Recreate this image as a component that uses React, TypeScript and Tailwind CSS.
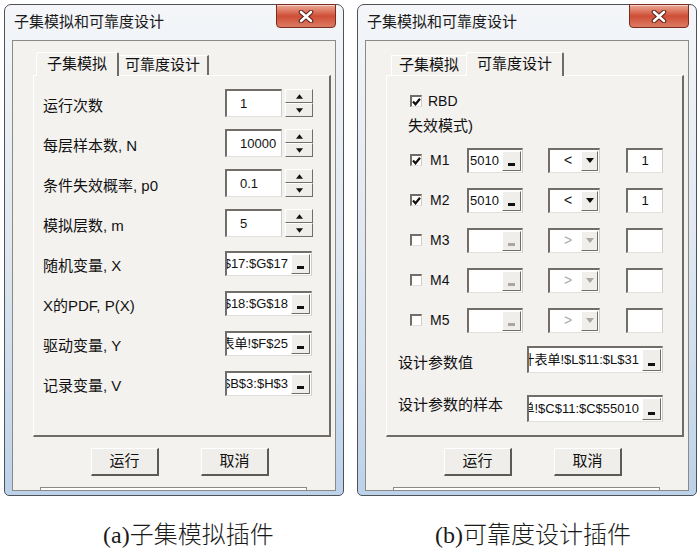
import { FC, ReactNode } from 'react';

const sunken =
    'border-t-2 border-l-2 border-r border-b border-t-[#716d68] border-l-[#716d68] border-r-[#cfccc8] border-b-[#e2e0dc] bg-white';
const raised =
    'border-t border-l border-r border-b border-t-white border-l-white border-r-[#716d68] border-b-[#716d68] bg-[#f0eeea]';

const Arrow: FC<{ up?: boolean; color?: string; w?: number }> = ({
    up,
    color = '#111',
    w = 7
}) => (
    <svg width={w} height={Math.ceil(w / 2) + 1} viewBox={`0 0 ${w} ${w / 2 + 1}`}>
        <path
            d={up ? `M${w / 2} 0L${w} ${w / 2 + 1}H0z` : `M0 0h${w}L${w / 2} ${w / 2 + 1}z`}
            fill={color}
        />
    </svg>
);

const Check: FC<{ checked?: boolean }> = ({ checked }) => (
    <div className={`flex h-[12px] w-[12px] flex-none items-center justify-center ${sunken}`}>
        {checked && (
            <svg width="9" height="8" viewBox="0 0 9 8">
                <path d="M1 3.5l2.5 2.8L8 0.8" stroke="#111" strokeWidth="2.2" fill="none" />
            </svg>
        )}
    </div>
);

const RefEdit: FC<{
    text?: string;
    className: string;
    left?: boolean;
    disabled?: boolean;
}> = ({ text, className, left, disabled }) => (
    <div className={`flex flex-none items-stretch ${sunken} ${className}`}>
        <div
            className={`flex min-w-0 flex-1 items-center overflow-hidden whitespace-nowrap text-[13px] ${
                left ? 'justify-start pl-[1px]' : 'justify-end pr-[3px]'
            }`}
        >
            <span className="flex-none">{text}</span>
        </div>
        <div
            className={`my-[1px] mr-[1px] flex w-[19px] flex-none items-end justify-center pb-[4px] ${raised}`}
        >
            <div className={`h-[3px] w-[7px] ${disabled ? 'bg-[#aaa7a2]' : 'bg-[#111]'}`} />
        </div>
    </div>
);

const Combo: FC<{ sym: string; disabled?: boolean }> = ({ sym, disabled }) => (
    <div className={`flex h-[25px] w-[52px] flex-none items-stretch ${sunken}`}>
        <div
            className={`flex flex-1 items-center pl-[14px] text-[14px] ${
                disabled ? 'text-[#aaa7a2]' : 'text-[#111]'
            }`}
        >
            {sym}
        </div>
        <div className={`my-[1px] mr-[1px] flex w-[17px] items-center justify-center ${raised}`}>
            <Arrow w={8} color={disabled ? '#aaa7a2' : '#111'} />
        </div>
    </div>
);

const SpinRow: FC<{ label: string; value: string }> = ({ label, value }) => (
    <div className="flex h-[40px] items-center">
        <div className="mt-[6px] w-[191px] pl-[9px] text-[15px]">{label}</div>
        <div className={`flex h-[28px] w-[57px] items-center pl-[13px] text-[13px] ${sunken}`}>
            {value}
        </div>
        <div className="ml-[3px] flex h-[28px] w-[28px] flex-col">
            <div className={`flex flex-1 items-center justify-center ${raised}`}>
                <Arrow up />
            </div>
            <div className={`flex flex-1 items-center justify-center ${raised}`}>
                <Arrow />
            </div>
        </div>
    </div>
);

const RefRow: FC<{ label: string; text: string }> = ({ label, text }) => (
    <div className="flex h-[40px] items-center">
        <div className="mt-[6px] w-[191px] pl-[9px] text-[15px]">{label}</div>
        <RefEdit text={text} className="h-[25px] w-[87px]" />
    </div>
);

const ModeRow: FC<{ name: string; on?: boolean }> = ({ name, on }) => (
    <div className="flex h-[40px] items-center pl-[23px]">
        <div className="flex w-[57px] items-center">
            <Check checked={on} />
            <span className="ml-[8px] text-[14px]">{name}</span>
        </div>
        <RefEdit
            text={on ? '5010' : ''}
            left
            disabled={!on}
            className="h-[25px] w-[56px]"
        />
        <div className="ml-[25px]">
            <Combo sym={on ? '<' : '>'} disabled={!on} />
        </div>
        <div
            className={`ml-[26px] flex h-[25px] w-[37px] items-center justify-center text-[13px] ${sunken}`}
        >
            {on ? '1' : ''}
        </div>
    </div>
);

const Tab: FC<{ label: string; active?: boolean }> = ({ label, active }) =>
    active ? (
        <div className="relative z-10 -mx-[2px] -mb-px flex h-[24px] items-center rounded-t-[2px] border-t border-l border-r-2 border-t-white border-l-white border-r-[#6f6b66] bg-[#f4f2ef] px-[10px] text-[15px]">
            {label}
        </div>
    ) : (
        <div className="flex h-[20px] items-center border-t border-l border-r-2 border-t-white border-l-white border-r-[#6f6b66] px-[7px] text-[15px]">
            {label}
        </div>
    );

const Btn: FC<{ children: ReactNode }> = ({ children }) => (
    <div className="flex h-[28px] w-[68px] items-center justify-center border-t border-l border-r-2 border-b-2 border-t-white border-l-white border-r-[#5d5954] border-b-[#5d5954] bg-[#f0eeea] text-[15px]">
        {children}
    </div>
);

const CloseBtn = () => (
    <div className="-mt-px flex h-[24px] w-[60px] items-center justify-center rounded-b-[4px] border border-[#7a2c20] bg-gradient-to-b from-[#eba895] via-[#cf4d36] to-[#dc7a62] shadow-[inset_0_1px_0_rgba(255,255,255,0.5)]">
        <svg width="16" height="13" viewBox="0 0 16 13">
            <path d="M3 2l10 9M13 2L3 11" stroke="#5a2018" strokeWidth="4.6" strokeLinecap="round" />
            <path d="M3 2l10 9M13 2L3 11" stroke="#ffffff" strokeWidth="2.6" strokeLinecap="round" />
        </svg>
    </div>
);

const Dialog: FC<{ relActive?: boolean; children: ReactNode }> = ({
    relActive,
    children
}) => (
    <div className="flex h-[492px] w-[340px] flex-none flex-col rounded-t-[7px] rounded-b-[5px] border border-[#4f5257] bg-gradient-to-b from-[#f4f6f9] via-[#dfe7f1] to-[#bcd2ea] px-[7px] pb-[4px]">
        <div className="flex h-[35px] flex-none items-start justify-between">
            <div className="pl-[2px] pt-[7px] text-[15px] leading-[20px] text-[#1a1a1a]">
                子集模拟和可靠度设计
            </div>
            <CloseBtn />
        </div>
        <div className="flex flex-1 flex-col border border-[#8d8a86] bg-[#f4f2ef]">
            <div className="mt-[11px] ml-[20px] mr-[4px] flex flex-col">
                <div className="flex items-end pl-[5px]">
                    <Tab label="子集模拟" active={!relActive} />
                    <Tab label="可靠度设计" active={relActive} />
                </div>
                <div className="h-[362px] border-t border-l border-r-2 border-b-2 border-t-white border-l-white border-r-[#6f6b66] border-b-[#6f6b66]">
                    {children}
                </div>
            </div>
            <div className="mt-[11px] ml-[78px] flex gap-[42px]">
                <Btn>运行</Btn>
                <Btn>取消</Btn>
            </div>
            <div className="mt-auto ml-[27px] h-[3px] w-[267px] border-t border-l border-r border-[#8d8a86] bg-white" />
        </div>
    </div>
);

const App: FC = () => (
    <div className="min-h-[554px] w-[700px] bg-white font-['Liberation_Sans','Noto_Sans_CJK_SC',sans-serif] text-[#111]">
        <div className="flex gap-[13px] pt-[4px] pl-[4px]">
            <Dialog>
                <div className="flex flex-col pt-[7px]">
                    <SpinRow label="运行次数" value="1" />
                    <SpinRow label="每层样本数, N" value="10000" />
                    <SpinRow label="条件失效概率, p0" value="0.1" />
                    <SpinRow label="模拟层数, m" value="5" />
                    <RefRow label="随机变量, X" text="Sheet1!$G$17:$G$17" />
                    <RefRow label="X的PDF, P(X)" text="Sheet1!$G$18:$G$18" />
                    <RefRow label="驱动变量, Y" text="设计表单!$F$25" />
                    <RefRow label="记录变量, V" text="Sheet1!$B$3:$H$3" />
                </div>
            </Dialog>
            <Dialog relActive>
                <div className="flex flex-col pt-[12px]">
                    <div className="flex h-[26px] items-center pl-[23px]">
                        <Check checked />
                        <span className="ml-[6px] text-[14px]">RBD</span>
                    </div>
                    <div className="flex h-[24px] items-center pl-[21px] text-[15px]">失效模式)</div>
                    <div className="h-[2px]" />
                    <ModeRow name="M1" on />
                    <ModeRow name="M2" on />
                    <ModeRow name="M3" />
                    <ModeRow name="M4" />
                    <ModeRow name="M5" />
                    <div className="flex h-[38px] items-center">
                        <div className="mt-[8px] w-[140px] pl-[11px] text-[15px]">设计参数值</div>
                        <RefEdit text="设计表单!$L$11:$L$31" className="h-[27px] w-[136px]" />
                    </div>
                    <div className="mt-[10px] flex h-[40px] items-center">
                        <div className="-mt-[6px] w-[140px] pl-[11px] text-[15px]">设计参数的样本</div>
                        <RefEdit text="设计表单!$C$11:$C$55010" className="h-[27px] w-[136px]" />
                    </div>
                </div>
            </Dialog>
        </div>
        <div className="mt-[25px] flex gap-[13px] pl-[4px] font-['Liberation_Serif','Noto_Sans_CJK_SC',serif] text-[24px] leading-[28px] font-light text-[#1a1a1a]">
            <div className="w-[340px] pl-[99px]">(a)子集模拟插件</div>
            <div className="w-[340px] pl-[78px]">(b)可靠度设计插件</div>
        </div>
    </div>
);

export default App;
